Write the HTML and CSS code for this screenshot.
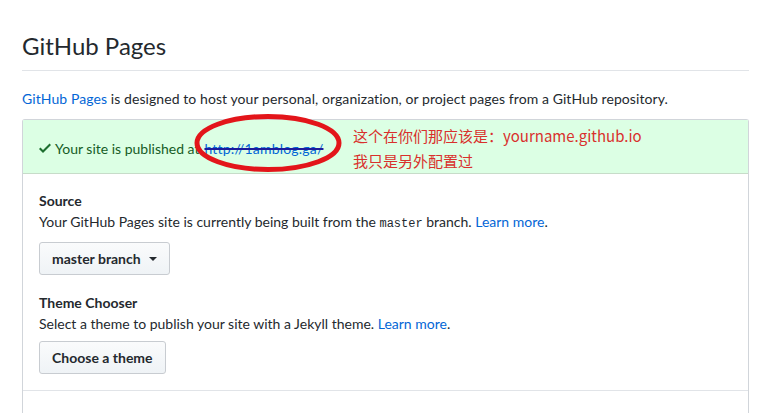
FILE: index.html
```html
<!DOCTYPE html>
<html>
<head>
<meta charset="utf-8">
<link rel="stylesheet" href="styles.css">
</head>
<body>
<div class="page">
  <h2 class="title">GitHub Pages</h2>
  <p class="intro"><a href="#" class="link">GitHub Pages</a> is designed to host your personal, organization, or project pages from a GitHub repository.</p>
  <div class="box">
    <div class="flash">
      <svg class="check" width="12" height="16" viewBox="0 0 12 16"><path d="M12 5l-8 8-4-4 1.5-1.5L4 10l6.5-6.5L12 5z" fill="#1d6e2f"/></svg>
      <span class="flash-text">Your site is published at</span>
      <span class="url-wrap"><a href="#" class="url">http://1amblog.ga/</a>
        <svg class="ring" width="150" height="60" viewBox="0 0 150 60"><ellipse cx="75" cy="30" rx="71" ry="26.5" fill="none" stroke="#e3151a" stroke-width="5"/></svg>
      </span>
      <div class="note">
        <div>这个在你们那应该是：yourname.github.io</div>
        <div>我只是另外配置过</div>
      </div>
    </div>
    <div class="section">
      <div class="label">Source</div>
      <p class="desc">Your GitHub Pages site is currently being built from the <code>master</code> branch. <a href="#" class="link">Learn more</a>.</p>
      <button class="btn btn-first">master branch <span class="caret"></span></button>
      <div class="label label-second">Theme Chooser</div>
      <p class="desc">Select a theme to publish your site with a Jekyll theme. <a href="#" class="link">Learn more</a>.</p>
      <button class="btn btn-second">Choose a theme</button>
    </div>
    <div class="section-next"></div>
  </div>
</div>
</body>
</html>
```

FILE: styles.css
```css
html, body {
  margin: 0;
  padding: 0;
  background: #fff;
}
body {
  font-family: Lato, "Noto Sans CJK SC", sans-serif;
  font-size: 14px;
  color: #24292e;
  overflow: hidden;
}
.page {
  margin-left: 22px;
  width: 727px;
  padding-top: 30px;
}
.title {
  margin: 0;
  font-size: 24px;
  font-weight: 400;
  line-height: 32px;
  padding-bottom: 8px;
  border-bottom: 1px solid #e1e4e8;
}
.intro {
  margin: 18px 0 0 0;
  line-height: 20px;
  letter-spacing: 0.08px;
}
.link {
  color: #0366d6;
  text-decoration: none;
}
.box {
  margin-top: 10px;
  border: 1px solid #d1d5da;
  border-bottom: none;
  border-top-left-radius: 3px;
  border-top-right-radius: 3px;
}
.flash {
  position: relative;
  display: flex;
  align-items: center;
  height: 50px;
  padding-top: 3px;
  padding-left: 16px;
  background: #dcffe4;
  border-bottom: 1px solid #c7dcc9;
  color: #165c26;
}
.check {
  margin-right: 4px;
}
.flash-text {
  margin-right: 5px;
}
.url-wrap {
  position: relative;
}
.url {
  color: #0366d6;
  letter-spacing: 0.2px;
  text-decoration: line-through;
  text-decoration-color: #1c1c9c;
  text-decoration-thickness: 2px;
}
.ring {
  position: absolute;
  left: -11px;
  top: -27px;
}
.note {
  position: absolute;
  left: 330px;
  top: 3px;
  color: #d9302c;
  font-family: "Noto Sans CJK SC", sans-serif;
  font-size: 15px;
  line-height: 25px;
}
.section {
  padding: 17px 16px 16px 16px;
  border-bottom: 1px solid #e1e4e8;
}
.label {
  font-weight: 700;
  line-height: 20px;
}
.label-second {
  margin-top: 18px;
}
.desc {
  margin: 1px 0 0 0;
  line-height: 20px;
}
code {
  font-family: "Liberation Mono", monospace;
  font-size: 12px;
}
.btn {
  display: inline-flex;
  align-items: center;
  box-sizing: border-box;
  height: 33px;
  padding: 0 12px;
  font-family: Lato, sans-serif;
  font-size: 14px;
  font-weight: 700;
  color: #24292e;
  background: linear-gradient(#fafbfc, #eff3f6);
  border: 1px solid #c8ccd1;
  border-radius: 3px;
}
.btn-first {
  margin-top: 8px;
}
.btn-second {
  margin-top: 7px;
}
.caret {
  display: inline-block;
  margin-left: 8px;
  border-top: 4px solid #24292e;
  border-left: 4px solid transparent;
  border-right: 4px solid transparent;
}
.section-next {
  height: 40px;
}
```
